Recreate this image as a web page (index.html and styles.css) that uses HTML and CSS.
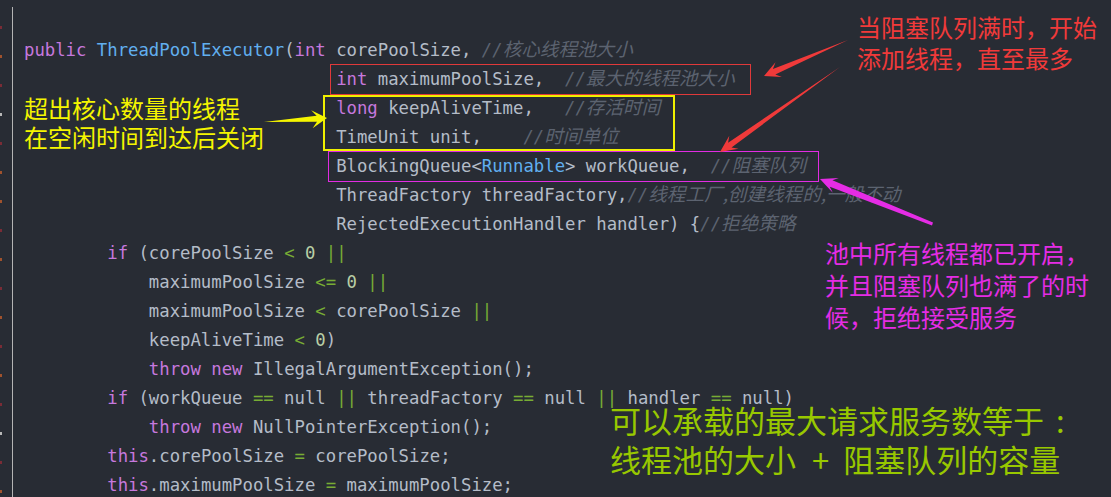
FILE: index.html
```html
<!DOCTYPE html>
<html lang="zh-CN">
<head>
<meta charset="utf-8">
<title>ThreadPoolExecutor</title>
<link rel="stylesheet" href="styles.css">
</head>
<body>
<div class="editor">
  <div class="gutter">
    <span class="mark red"></span><span class="mark orange"></span><span class="mark red"></span><span class="mark white"></span><span class="mark red"></span><span class="mark orange"></span><span class="mark orange"></span><span class="mark red"></span><span class="mark orange"></span><span class="mark red"></span><span class="mark orange"></span><span class="mark red"></span><span class="mark orange"></span><span class="mark red"></span><span class="mark white"></span><span class="mark red"></span><span class="mark orange"></span>
  </div>
  <div class="code">
<div class="ln"><span class="k">public</span> <span class="t">ThreadPoolExecutor</span>(<span class="k">int</span> corePoolSize, <span class="c">//<span class="zh">核心线程池大小</span></span></div>
<div class="ln">                              <span class="k">int</span> maximumPoolSize,  <span class="c">//<span class="zh">最大的线程池大小</span></span></div>
<div class="ln">                              <span class="k">long</span> keepAliveTime,   <span class="c">//<span class="zh">存活时间</span></span></div>
<div class="ln">                              TimeUnit unit,    <span class="c">//<span class="zh">时间单位</span></span></div>
<div class="ln">                              BlockingQueue&lt;<span class="t">Runnable</span>&gt; workQueue,  <span class="c">//<span class="zh">阻塞队列</span></span></div>
<div class="ln">                              ThreadFactory threadFactory,<span class="c">//<span class="zh">线程工厂,创建线程的,一般不动</span></span></div>
<div class="ln">                              RejectedExecutionHandler handler) {<span class="c">//<span class="zh">拒绝策略</span></span></div>
<div class="ln">        <span class="k">if</span> (corePoolSize <span class="o">&lt;</span> <span class="n">0</span> <span class="o">||</span></div>
<div class="ln">            maximumPoolSize <span class="o">&lt;=</span> <span class="n">0</span> <span class="o">||</span></div>
<div class="ln">            maximumPoolSize <span class="o">&lt;</span> corePoolSize <span class="o">||</span></div>
<div class="ln">            keepAliveTime <span class="o">&lt;</span> <span class="n">0</span>)</div>
<div class="ln">            <span class="k">throw</span> <span class="k">new</span> IllegalArgumentException();</div>
<div class="ln">        <span class="k">if</span> (workQueue <span class="o">==</span> null <span class="o">||</span> threadFactory <span class="o">==</span> null <span class="o">||</span> handler <span class="o">==</span> null)</div>
<div class="ln">            <span class="k">throw</span> <span class="k">new</span> NullPointerException();</div>
<div class="ln">        <span class="k">this</span>.corePoolSize <span class="o">=</span> corePoolSize;</div>
<div class="ln">        <span class="k">this</span>.maximumPoolSize <span class="o">=</span> maximumPoolSize;</div>
  </div>
</div>

<div class="box box-red"></div>
<div class="box box-yellow"></div>
<div class="box box-magenta"></div>

<div class="note note-yellow">超出核心数量的线程<br>在空闲时间到达后关闭</div>
<div class="note note-red">当阻塞队列满时，开始<br>添加线程，直至最多</div>
<div class="note note-magenta">池中所有线程都已开启，<br>并且阻塞队列也满了的时<br>候，拒绝接受服务</div>
<div class="note note-green">可以承载的最大请求服务数等于<span class="colon">:</span><br>线程池的大小<span class="plus">+</span>阻塞队列的容量</div>

<svg class="arrows" width="1111" height="497" viewBox="0 0 1111 497">
  <polygon fill="#f5f500" points="264,122 317,121.8 312.6,128.2 327,118 311.2,110.2 316.6,115.8"/>
  <polygon fill="#f03a3a" points="848,40 775.3,74.5 781.9,77.1 764,76 775.5,62.3 772.9,68.9"/>
  <polygon fill="#f03a3a" points="840,67 731.5,147.5 738.5,148.7 720,152 729.3,135.7 728.1,142.7"/>
  <polygon fill="#e52ce5" points="933,222.5 932,225.5 829.8,186.7 832.8,192.7 820,179 838.8,177.9 832.4,180.2"/>
</svg>
</body>
</html>
```

FILE: styles.css
```css
html, body {
  margin: 0;
  padding: 0;
  background: #282c34;
  width: 1111px;
  height: 497px;
  overflow: hidden;
}

body {
  position: relative;
  font-family: "DejaVu Sans Mono", "Noto Sans CJK SC", monospace;
}

.editor {
  display: flex;
  padding-top: 7px;
}

.gutter {
  width: 12px;
  display: flex;
  flex-direction: column;
  padding-top: 19px;
  gap: 26px;
}

.mark {
  display: block;
  width: 2px;
  height: 3px;
}
.mark.red { background: #7a2c36; }
.mark.orange { background: #a0522d; }
.mark.white { background: #b8b8b8; }

.code {
  border-left: 1px solid #b4b4b4;
  padding: 29px 0 0 11px;
  height: 500px;
  box-sizing: border-box;
  flex: 1;
}

.ln {
  white-space: pre;
  font-size: 17.3px;
  line-height: 29px;
  height: 29px;
  color: #b4bcc8;
}

.k { color: #c678dd; }
.t { color: #61afef; }
.c { color: #5c6370; font-style: italic; }
.o { color: #78ac34; }
.n { color: #b9cfa6; }
.zh {
  font-family: "Noto Sans CJK SC", sans-serif;
  font-size: 18.6px;
  line-height: 1;
}

.box {
  position: absolute;
  box-sizing: border-box;
}
.box-red {
  left: 330px;
  top: 64px;
  width: 421px;
  height: 31px;
  border: 1px solid #e0393a;
}
.box-yellow {
  left: 323px;
  top: 95px;
  width: 352px;
  height: 56px;
  border: 2px solid #f0f000;
}
.box-magenta {
  left: 328px;
  top: 151px;
  width: 491px;
  height: 31px;
  border: 1px solid #e22ce2;
}

.note {
  position: absolute;
  font-family: "Noto Sans CJK SC", sans-serif;
  white-space: nowrap;
}
.note-yellow {
  left: 24px;
  top: 93px;
  font-size: 24px;
  line-height: 29px;
  color: #f5f500;
}
.note-red {
  left: 857px;
  top: 11px;
  font-size: 24px;
  line-height: 31px;
  color: #f03a3a;
}
.note-magenta {
  left: 825px;
  top: 237px;
  font-size: 24px;
  line-height: 32px;
  color: #e52ce5;
}
.note-green {
  left: 610px;
  top: 400px;
  font-size: 31px;
  line-height: 39px;
  color: #98c800;
}
.colon {
  margin-left: 12px;
}
.plus {
  margin: 0 14px 0 16px;
}

.arrows {
  position: absolute;
  left: 0;
  top: 0;
  pointer-events: none;
}
```
